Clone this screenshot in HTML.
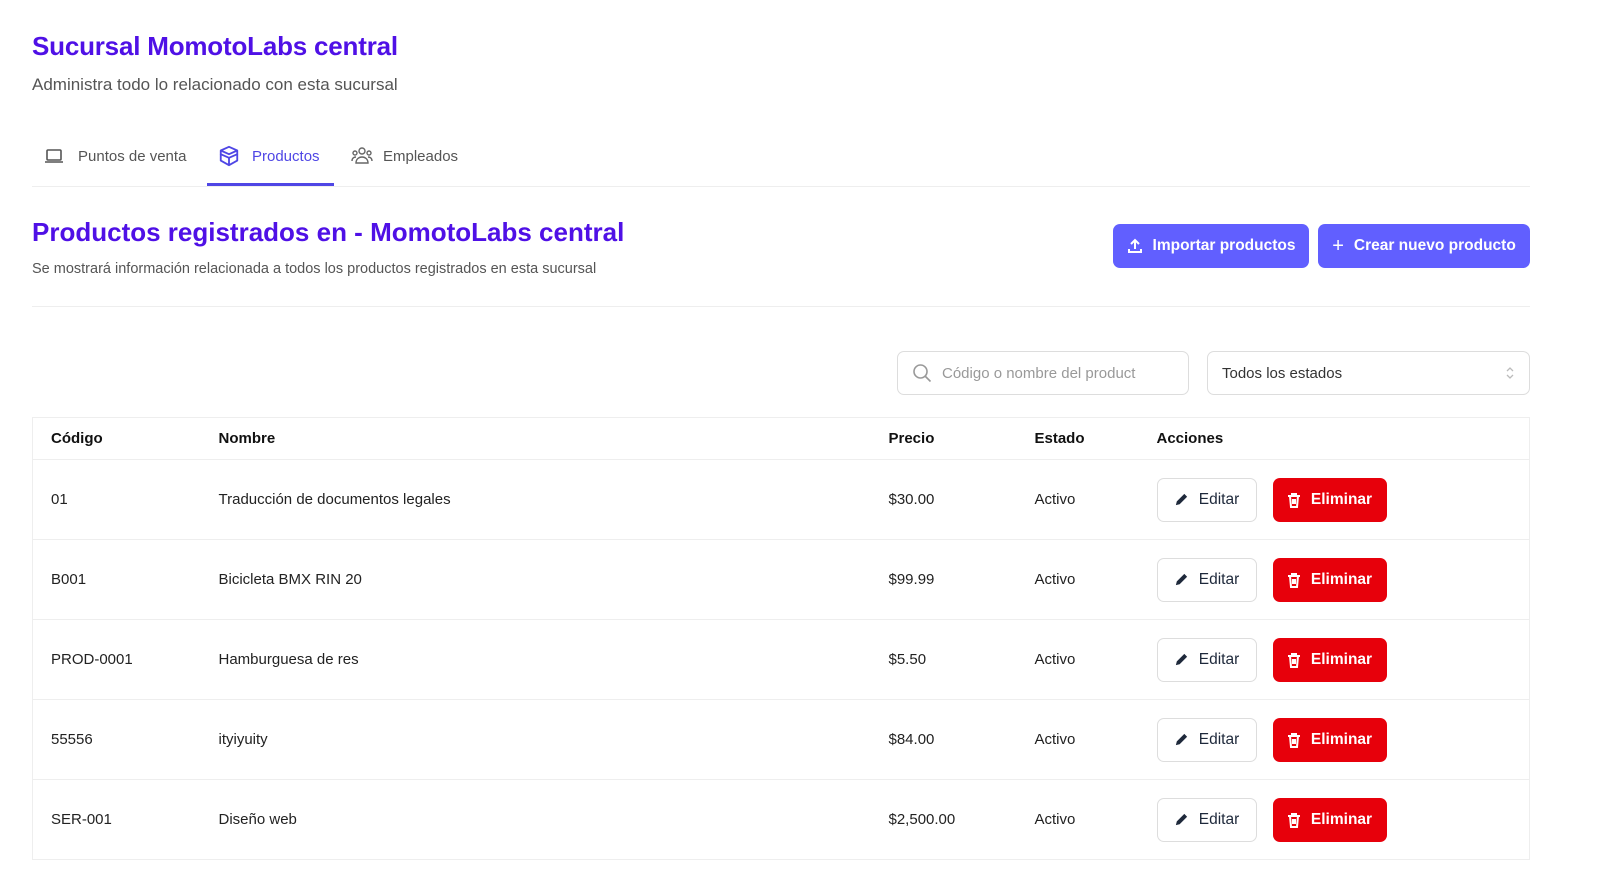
<!DOCTYPE html>
<html style="width:1602px;height:880px;overflow:hidden"><head><meta charset="utf-8"><style>
*{box-sizing:border-box;margin:0;padding:0}
body{width:1602px;height:880px;overflow:hidden;background:#fff;font-family:"Liberation Sans",sans-serif;color:#1f2937}
#w{position:relative;width:1602px;height:880px;overflow:hidden}
.abs{position:absolute}
h1{position:absolute;left:32px;top:31px;font-size:26px;font-weight:600;color:#4f10e6;letter-spacing:-0.2px}
.sub{left:32px;top:75px;font-size:17px;color:#555}
.tabs{left:32px;top:186px;width:1498px;height:1px;background:#eee}
.tab{top:144px;height:24px;font-size:15px;color:#555;display:flex;align-items:center;gap:10px}
.ul{left:207px;top:183px;width:127px;height:3px;background:#4f46e5}
h2{position:absolute;left:32px;top:217px;font-size:26px;font-weight:600;color:#4f10e6}
.desc{left:32px;top:261px;font-size:14.5px;color:#555}
.hr{left:32px;top:306px;width:1498px;height:1px;background:#eee}
.btn{top:224px;height:44px;border-radius:7px;background:#615fff;color:#fff;font-size:15.5px;font-weight:600;display:flex;align-items:center;justify-content:center;gap:10px}
.inp{top:351px;height:44px;border:1px solid #ddd;border-radius:7px;font-size:15px;display:flex;align-items:center}
table{position:absolute;left:32px;top:417px;width:1498px;border-collapse:collapse;border:1px solid #eee;font-size:15px}
td,th{text-align:left;padding-left:18px;border-bottom:1px solid #eee}
th{height:42px;font-weight:700;color:#111}
td{height:80px;color:#222}
.ed{display:inline-flex;align-items:center;gap:10px;height:44px;width:100px;border:1px solid #ddd;border-radius:7px;justify-content:center;font-size:15.5px;color:#1e293b;vertical-align:middle}
.el{display:inline-flex;align-items:center;gap:10px;height:44px;width:114px;border-radius:7px;background:#e7000b;color:#fff;justify-content:center;font-size:15.5px;font-weight:600;margin-left:16px;vertical-align:middle}
</style></head><body><div id="w">
<h1>Sucursal MomotoLabs central</h1>
<div class="abs sub">Administra todo lo relacionado con esta sucursal</div>
<div class="abs tab" style="left:44px"><svg width="20" height="18" viewBox="0 0 20 18" fill="none" stroke="#555" stroke-width="1.6"><rect x="3" y="3" width="14" height="10" rx="1"/><path d="M1 15h18"/></svg><span style="margin-left:4px">Puntos de venta</span></div>
<div class="abs tab" style="left:218px;color:#4f46e5"><svg width="22" height="22" viewBox="0 0 24 24" fill="none" stroke="#4f46e5" stroke-width="2" stroke-linejoin="round"><path d="M12 2l9 4v4l-9 4-9-4V6z"/><path d="M3 10v7l9 5 9-5v-7M12 14v8M3 6l9 4 9-4"/></svg><span style="margin-left:2px">Productos</span></div>
<div class="abs tab" style="left:351px"><svg width="22" height="20" viewBox="0 0 22 20" fill="none" stroke="#666" stroke-width="1.4"><circle cx="11" cy="5" r="3"/><circle cx="4" cy="7" r="2"/><circle cx="18" cy="7" r="2"/><path d="M5 17c0-4 3-6 6-6s6 2 6 6zM1 15c0-3 2-4 4-4M21 15c0-3-2-4-4-4"/></svg><span>Empleados</span></div>
<div class="abs tabs"></div><div class="abs ul"></div>
<h2>Productos registrados en - MomotoLabs central</h2>
<div class="abs desc">Se mostrará información relacionada a todos los productos registrados en esta sucursal</div>
<div class="abs btn" style="left:1113px;width:196px"><svg width="16" height="16" viewBox="0 0 16 16" fill="none" stroke="#fff" stroke-width="2"><path d="M8 11V2M4 6l4-4 4 4M2 11v3h12v-3"/></svg>Importar productos</div>
<div class="abs btn" style="left:1318px;width:212px"><span style="font-size:20px;font-weight:400">+</span>Crear nuevo producto</div>
<div class="abs hr"></div>
<div class="abs inp" style="left:897px;width:292px;color:#999"><svg style="margin:0 10px 0 14px" width="20" height="20" viewBox="0 0 20 20" fill="none" stroke="#999" stroke-width="1.6"><circle cx="8.5" cy="8.5" r="6.5"/><path d="M13.5 13.5l5 5"/></svg>Código o nombre del product</div>
<div class="abs inp" style="left:1207px;width:323px;padding-left:14px;color:#333">Todos los estados<svg style="position:absolute;right:14px" width="10" height="16" viewBox="0 0 10 16" fill="none" stroke="#bbb" stroke-width="1.3"><path d="M2 6l3-3 3 3M2 10l3 3 3-3"/></svg></div>
<table>
<tr><th style="width:168px">Código</th><th style="width:670px">Nombre</th><th style="width:146px">Precio</th><th style="width:122px">Estado</th><th>Acciones</th></tr>
<tr><td>01</td><td>Traducción de documentos legales</td><td>$30.00</td><td>Activo</td><td><span class="ed"><svg width="15" height="15" viewBox="0 0 16 16"><path d="M2 14l1-4 8-8 3 3-8 8z" fill="#1e293b"/></svg>Editar</span><span class="el"><svg width="14" height="16" viewBox="0 0 14 16" fill="none" stroke="#fff" stroke-width="2"><path d="M1 4h12M5 4V2h4v2M3 4l1 11h6l1-11M6 7v5M8 7v5"/></svg>Eliminar</span></td></tr>
<tr><td>B001</td><td>Bicicleta BMX RIN 20</td><td>$99.99</td><td>Activo</td><td><span class="ed"><svg width="15" height="15" viewBox="0 0 16 16"><path d="M2 14l1-4 8-8 3 3-8 8z" fill="#1e293b"/></svg>Editar</span><span class="el"><svg width="14" height="16" viewBox="0 0 14 16" fill="none" stroke="#fff" stroke-width="2"><path d="M1 4h12M5 4V2h4v2M3 4l1 11h6l1-11M6 7v5M8 7v5"/></svg>Eliminar</span></td></tr>
<tr><td>PROD-0001</td><td>Hamburguesa de res</td><td>$5.50</td><td>Activo</td><td><span class="ed"><svg width="15" height="15" viewBox="0 0 16 16"><path d="M2 14l1-4 8-8 3 3-8 8z" fill="#1e293b"/></svg>Editar</span><span class="el"><svg width="14" height="16" viewBox="0 0 14 16" fill="none" stroke="#fff" stroke-width="2"><path d="M1 4h12M5 4V2h4v2M3 4l1 11h6l1-11M6 7v5M8 7v5"/></svg>Eliminar</span></td></tr>
<tr><td>55556</td><td>ityiyuity</td><td>$84.00</td><td>Activo</td><td><span class="ed"><svg width="15" height="15" viewBox="0 0 16 16"><path d="M2 14l1-4 8-8 3 3-8 8z" fill="#1e293b"/></svg>Editar</span><span class="el"><svg width="14" height="16" viewBox="0 0 14 16" fill="none" stroke="#fff" stroke-width="2"><path d="M1 4h12M5 4V2h4v2M3 4l1 11h6l1-11M6 7v5M8 7v5"/></svg>Eliminar</span></td></tr>
<tr><td>SER-001</td><td>Diseño web</td><td>$2,500.00</td><td>Activo</td><td><span class="ed"><svg width="15" height="15" viewBox="0 0 16 16"><path d="M2 14l1-4 8-8 3 3-8 8z" fill="#1e293b"/></svg>Editar</span><span class="el"><svg width="14" height="16" viewBox="0 0 14 16" fill="none" stroke="#fff" stroke-width="2"><path d="M1 4h12M5 4V2h4v2M3 4l1 11h6l1-11M6 7v5M8 7v5"/></svg>Eliminar</span></td></tr>
</table>
</div></body></html>
